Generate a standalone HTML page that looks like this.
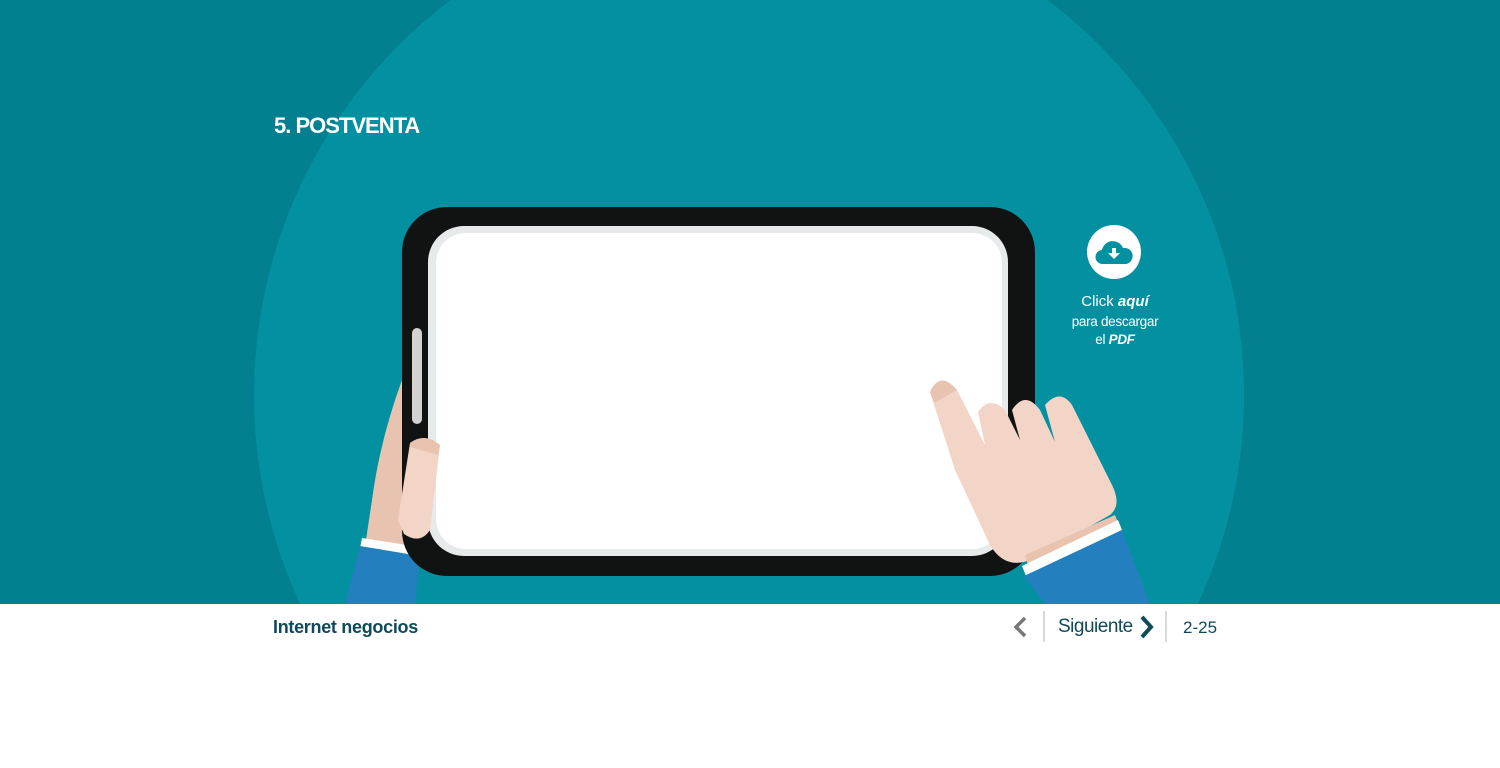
<!DOCTYPE html>
<html><head><meta charset="utf-8"><style>
html,body{margin:0;width:1500px;height:768px;overflow:hidden}
body{background:#fff;font-family:"Liberation Sans",sans-serif;position:relative}
.t{position:absolute;color:#fff}
</style></head><body>
<svg width="1500" height="604" style="position:absolute;left:0;top:0">
<rect width="1500" height="604" fill="#03808f"/>
<circle cx="749" cy="395" r="495" fill="#0391a1"/>
<path d="M402 380 Q380 440 372 500 L366 540 L420 548 L425 420 Z" fill="#e8c4b0"/>
<path d="M362 538 L420 547 L418 558 L360 548 Z" fill="#fff"/>
<path d="M360 546 L420 556 L415 604 L345 604 Z" fill="#237fbd"/>
<rect x="402" y="207" width="633" height="369" rx="45" fill="#111312"/>
<rect x="428" y="226" width="580" height="330" rx="36" fill="#e6eaea"/>
<rect x="436" y="233" width="566" height="316" rx="30" fill="#fff"/>
<rect x="412" y="328" width="10" height="96" rx="5" fill="#d3d2d0"/>
<path d="M410 443 Q425 432 440 445 L430 530 Q420 545 404 534 L398 520 Z" fill="#f3d5c7"/>
<path d="M410 443 Q425 432 440 445 L438 455 L410 447 Z" fill="#e8c4b0"/>
<path d="M958 462 L1000 555 L1010 560 L1000 480 Z" fill="#e8c4b0"/>
<path d="M930 392 Q940 370 957 390 L985 445 L978 412 Q990 395 1005 410 L1020 440 L1012 410 Q1025 390 1040 410 L1055 442 L1045 405 Q1060 388 1072 405 L1112 485 Q1122 505 1110 515 L1030 560 Q1005 570 990 545 L955 470 Z" fill="#f3d5c7"/>
<path d="M930 392 Q940 370 957 390 L934 403 Z" fill="#e8c4b0"/>
<path d="M1025 555 L1115 515 L1120 528 L1030 572 Z" fill="#e8c4b0"/>
<path d="M1022 566 L1118 520 L1122 530 L1026 576 Z" fill="#fff"/>
<path d="M1024 576 L1122 530 L1150 604 L1045 604 Z" fill="#237fbd"/>
<circle cx="1114" cy="252" r="27" fill="#fff"/>
<path d="M1103 264 a7 7 0 0 1 -1 -14 a11 11 0 0 1 21 -2 a8 8 0 0 1 3 16 Z" fill="#0391a1"/>
<path d="M1112 248 h4 v5 h4 l-6 6 l-6 -6 h4 Z" fill="#fff"/>
</svg>
<div class="t" style="left:274px;top:113px;font-size:22px;font-weight:bold;letter-spacing:-1px">5. POSTVENTA</div>
<div class="t" style="left:1060px;top:292px;width:110px;text-align:center;font-size:15px;line-height:20px">Click <b><i>aquí</i></b></div>
<div class="t" style="left:1060px;top:313px;width:110px;text-align:center;font-size:13.5px;line-height:18px;letter-spacing:-0.3px">para descargar<br>el <b><i>PDF</i></b></div>
<div style="position:absolute;left:273px;top:617px;font-size:18px;font-weight:bold;color:#0e4a5a;letter-spacing:-0.3px">Internet negocios</div>
<svg width="240" height="40" style="position:absolute;left:1000px;top:608px">
<path d="M25 10 L16 19 L25 28" stroke="#777" stroke-width="3.5" fill="none"/>
<line x1="44" y1="3" x2="44" y2="34" stroke="#ccc" stroke-width="1.5"/>
<path d="M142 9 L151 19 L142 29" stroke="#0e4a5a" stroke-width="4" fill="none"/>
<line x1="166" y1="3" x2="166" y2="34" stroke="#ccc" stroke-width="1.5"/>
</svg>
<div style="position:absolute;left:1058px;top:616px;font-size:19px;color:#0e4a5a;letter-spacing:-0.5px">Siguiente</div>
<div style="position:absolute;left:1183px;top:618px;font-size:17px;color:#0e4a5a">2-25</div>
</body></html>
